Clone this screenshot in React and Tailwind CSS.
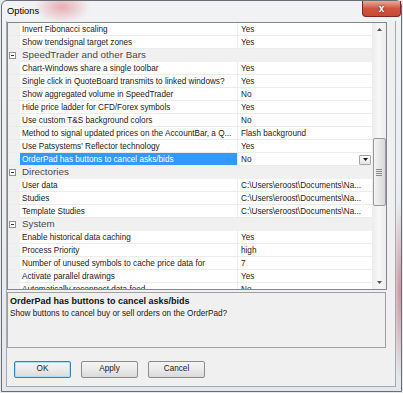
import React from 'react';

const rows = [
  { name: 'Invert Fibonacci scaling', value: 'Yes' },
  { name: 'Show trendsignal target zones', value: 'Yes' },
  { category: 'SpeedTrader and other Bars' },
  { name: 'Chart-Windows share a single toolbar', value: 'Yes' },
  { name: 'Single click in QuoteBoard transmits to linked windows?', value: 'Yes' },
  { name: 'Show aggregated volume in SpeedTrader', value: 'No' },
  { name: 'Hide price ladder for CFD/Forex symbols', value: 'Yes' },
  { name: 'Use custom T&S background colors', value: 'No' },
  { name: 'Method to signal updated prices on the AccountBar, a Q...', value: 'Flash background' },
  { name: "Use Patsystems' Reflector technology", value: 'Yes' },
  { name: 'OrderPad has buttons to cancel asks/bids', value: 'No', selected: true },
  { category: 'Directories' },
  { name: 'User data', value: 'C:\\Users\\eroost\\Documents\\Na...' },
  { name: 'Studies', value: 'C:\\Users\\eroost\\Documents\\Na...' },
  { name: 'Template Studies', value: 'C:\\Users\\eroost\\Documents\\Na...' },
  { category: 'System' },
  { name: 'Enable historical data caching', value: 'Yes' },
  { name: 'Process Priority', value: 'high' },
  { name: 'Number of unused symbols to cache price data for', value: '7' },
  { name: 'Activate parallel drawings', value: 'Yes' },
  { name: 'Automatically reconnect data feed', value: 'No' },
];

const CategoryRow = ({ label }) => (
  <div className="flex h-[13px] shrink-0 items-center bg-[#f0f0f0] border-b border-[#f0f0f0]">
    <div className="w-[12px] h-full flex items-center">
      <div className="ml-[1px] w-[7px] h-[7px] border border-[#919191] bg-white flex items-center justify-center">
        <div className="w-[3px] h-px bg-[#333]" />
      </div>
    </div>
    <span className="pl-[2px] text-[9.8px] leading-[12px] text-[#4a4a4a] whitespace-nowrap">{label}</span>
  </div>
);

const PropRow = ({ row }) => (
  <div className="flex h-[13px] shrink-0 border-b border-[#ececec]">
    <div className="w-[12px] bg-[#f0f0f0]" />
    <div
      className={`w-[218px] border-r border-[#ececec] pl-[2px] pt-px text-[8.2px] leading-[11px] whitespace-nowrap overflow-hidden ${
        row.selected ? 'bg-[#3399ff] text-white' : 'bg-white text-[#1a1a1a]'
      }`}
    >
      {row.name}
    </div>
    <div className="flex-1 flex items-center bg-white pl-[3px] pt-px text-[8.2px] leading-[11px] text-[#1a1a1a] whitespace-nowrap overflow-hidden">
      <span className="flex-1">{row.value}</span>
      {row.selected && (
        <div className="mr-px w-[12px] h-[10px] border border-[#a5a5a5] rounded-[1px] bg-linear-to-b from-white to-[#e3e3e3] flex items-center justify-center">
          <svg width="5" height="3" viewBox="0 0 5 3">
            <path d="M0 0h5L2.5 3z" fill="#111" />
          </svg>
        </div>
      )}
    </div>
  </div>
);

const Scrollbar = () => (
  <div className="w-[14px] bg-linear-to-r from-[#ececec] via-[#f7f7f7] to-[#ececec] flex flex-col items-center">
    <div className="h-[13px] flex items-center justify-center">
      <svg width="5" height="3" viewBox="0 0 5 3">
        <path d="M0 3h5L2.5 0z" fill="#555" />
      </svg>
    </div>
    <div className="mt-[102px] w-[13px] h-[68px] rounded-[2px] border border-[#999] bg-linear-to-r from-[#f3f3f3] to-[#d9d9d9] flex flex-col items-center justify-center gap-px">
      <div className="w-[6px] h-px bg-[#8a8a8a]" />
      <div className="w-[6px] h-px bg-[#8a8a8a]" />
      <div className="w-[6px] h-px bg-[#8a8a8a]" />
      <div className="w-[6px] h-px bg-[#8a8a8a]" />
    </div>
    <div className="mt-auto h-[13px] flex items-center justify-center">
      <svg width="5" height="3" viewBox="0 0 5 3">
        <path d="M0 0h5L2.5 3z" fill="#555" />
      </svg>
    </div>
  </div>
);

const Button = ({ label, focused }) => (
  <button
    className={`w-[57px] h-[17px] rounded-[2px] border text-[8.2px] text-[#1a1a1a] bg-linear-to-b from-[#f4f4f4] via-[#ebebeb] to-[#d9d9d9] ${
      focused ? 'border-[#3c7fb1] shadow-[inset_0_0_0_1px_#a9dff5]' : 'border-[#8c8c8c]'
    }`}
  >
    {label}
  </button>
);

export default function App() {
  return (
    <div className="w-[403px] h-[393px] bg-[#e6e9ec] font-['Liberation_Sans',Arial,sans-serif] overflow-hidden">
      <div className="ml-px w-[401px] h-[392px] border border-[#6a6e74] rounded-t-[6px] flex flex-col bg-[radial-gradient(ellipse_28px_16px_at_60px_6px,#e8aeb3,transparent),radial-gradient(ellipse_8px_90px_at_398px_290px,#c9959c,transparent),linear-gradient(to_bottom,#f1f2f4_0%,#e4e8ec_100%)]">
        {/* Title bar */}
        <div className="h-[20px] flex items-start shrink-0">
          <span className="pl-[5px] pt-[4px] text-[9.3px] leading-[12px] text-black">Options</span>
          <div className="ml-auto w-[39px] h-[16px] rounded-b-[4px] border border-t-0 border-[#7a2a22] bg-linear-to-b from-[#e9a99c] via-[#d0543f] to-[#c74a36] flex items-center justify-center">
            <span className="text-white text-[10px] leading-none font-bold [text-shadow:0_0_2px_#5a1a12]">x</span>
          </div>
        </div>

        {/* Client area */}
        <div className="ml-[4px] w-[390px] h-[366px] bg-[#f0f0f0] border-x border-b border-[#a3aab2] pt-px flex flex-col">
          {/* Property grid */}
          <div className="w-[380px] h-[268px] border border-[#828790] bg-white flex">
            <div className="w-[364px] flex flex-col overflow-hidden">
              {rows.map((r, i) =>
                r.category ? <CategoryRow key={i} label={r.category} /> : <PropRow key={i} row={r} />
              )}
            </div>
            <Scrollbar />
          </div>

          {/* Description */}
          <div className="mt-[2px] w-[379px] h-[56px] border border-[#a0a0a0] bg-[#f0f0f0] px-[2px] pt-[3px]">
            <div className="text-[9px] leading-[11px] font-bold text-[#111]">OrderPad has buttons to cancel asks/bids</div>
            <div className="mt-px text-[8.2px] leading-[12px] text-[#1a1a1a]">
              Show buttons to cancel buy or sell orders on the OrderPad?
            </div>
          </div>

          {/* Buttons */}
          <div className="mt-[13px] pl-[7px] flex gap-[10px]">
            <Button label="OK" focused />
            <Button label="Apply" />
            <Button label="Cancel" />
          </div>
        </div>
      </div>
    </div>
  );
}
